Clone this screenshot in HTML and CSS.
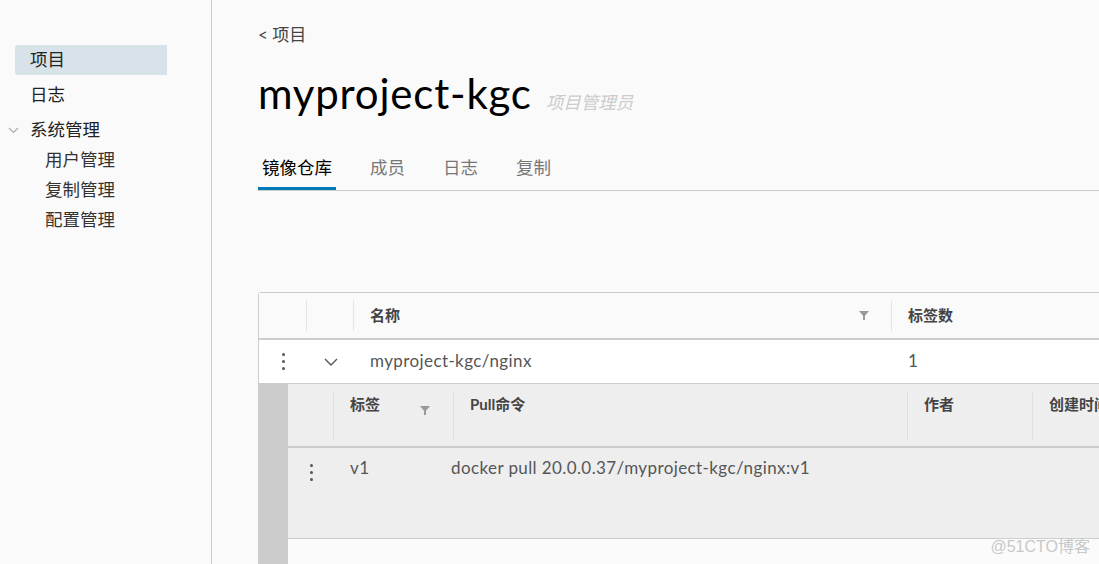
FILE: index.html
```html
<!DOCTYPE html>
<html lang="zh-CN">
<head>
    <meta charset="UTF-8">
    <title>myproject-kgc</title>
    <link rel="stylesheet" href="styles.css">
</head>
<body>
    <div class="sidebar">
        <div class="nav-item active">项目</div>
        <div class="nav-item">日志</div>
        <div class="nav-item group">
            <svg class="caret" width="11" height="7" viewBox="0 0 11 7"><path d="M1 1l4.5 4.5L10 1" fill="none" stroke="#aaa" stroke-width="1.2"/></svg>
            系统管理
        </div>
        <div class="nav-sub">用户管理</div>
        <div class="nav-sub">复制管理</div>
        <div class="nav-sub">配置管理</div>
    </div>

    <div class="main">
        <div class="breadcrumb">&lt; 项目</div>
        <div class="title-line">
            <h1>myproject-kgc</h1>
            <span class="role">项目管理员</span>
        </div>

        <div class="tabs">
            <div class="tab active">镜像仓库</div>
            <div class="tab">成员</div>
            <div class="tab">日志</div>
            <div class="tab">复制</div>
        </div>

        <div class="datagrid">
            <div class="grid-head">
                <div class="cell"></div>
                <div class="cell sep"></div>
                <div class="cell sep title">名称 <span class="filter"></span></div>
                <div class="cell sep title">标签数</div>
            </div>
            <div class="grid-row">
                <div class="cell center">
                    <span class="dots"><i></i><i></i><i></i></span>
                </div>
                <div class="cell center">
                    <svg width="14" height="8" viewBox="0 0 14 8"><path d="M1 1l6 6 6-6" fill="none" stroke="#565656" stroke-width="1.4"/></svg>
                </div>
                <div class="cell">myproject-kgc/nginx</div>
                <div class="cell">1</div>
            </div>

            <div class="detail">
                <div class="strip"></div>
                <div class="panel">
                    <div class="sub-head">
                        <div class="cell"></div>
                        <div class="cell sep title">标签 <span class="filter"></span></div>
                        <div class="cell sep title">Pull命令</div>
                        <div class="cell sep title">作者</div>
                        <div class="cell sep title">创建时间</div>
                    </div>
                    <div class="sub-row">
                        <div class="cell center">
                            <span class="dots"><i></i><i></i><i></i></span>
                        </div>
                        <div class="cell">v1</div>
                        <div class="cell">docker pull 20.0.0.37/myproject-kgc/nginx:v1</div>
                        <div class="cell"></div>
                        <div class="cell"></div>
                    </div>
                    <div class="sub-foot"></div>
                </div>
            </div>
        </div>
    </div>

    <div class="watermark">@51CTO博客</div>
</body>
</html>
```

FILE: styles.css
```css
body {
    margin: 0;
    height: 100vh;
    display: flex;
    background-color: #fafafa;
    color: #000;
    font-family: Lato, "Noto Sans CJK SC", sans-serif;
    overflow: hidden;
}

/* left nav */
.sidebar {
    width: 211px;
    flex-shrink: 0;
    border-right: 1px solid #ccc;
    padding-top: 45px;
}

.nav-item {
    margin-left: 15px;
    width: 137px;
    height: 30px;
    line-height: 29px;
    padding-left: 15px;
    margin-bottom: 5px;
    font-size: 17.5px;
    color: #222;
    border-radius: 3px 0 0 3px;
    position: relative;
}
.nav-item.group {
    margin-bottom: 0;
}
.nav-item.active {
    background-color: #d8e3e9;
}
.nav-item .caret {
    position: absolute;
    left: -7px;
    top: 12px;
}

.nav-sub {
    margin-left: 45px;
    height: 30px;
    line-height: 29px;
    font-size: 17.5px;
    color: #333;
}

/* content */
.main {
    flex: 1;
    padding-left: 46px;
    overflow: hidden;
}

.breadcrumb {
    margin-top: 23px;
    height: 24px;
    line-height: 24px;
    font-size: 17px;
    color: #444;
}

.title-line {
    display: flex;
    align-items: baseline;
    margin-top: 22px;
    height: 50px;
}
.title-line h1 {
    margin: 0;
    font-size: 42px;
    font-weight: 400;
    letter-spacing: 0.8px;
    line-height: 48px;
    color: #000;
}
.title-line .role {
    margin-left: 14px;
    font-size: 17.5px;
    font-style: italic;
    color: #ccc;
}

.tabs {
    display: flex;
    gap: 30px;
    margin-top: 27px;
    border-bottom: 1px solid #ccc;
    width: 1000px;
}
.tab {
    padding: 10px 4px;
    line-height: 24px;
    font-size: 17.5px;
    color: #777;
}
.tab.active {
    color: #000;
    box-shadow: inset 0 -3px 0 #0079b8;
}

/* table */
.datagrid {
    margin-top: 101px;
    width: 1000px;
    background-color: #fff;
    border: 1px solid #ccc;
    border-radius: 3px 0 0 0;
    font-size: 17px;
    letter-spacing: 0.4px;
    color: #565656;
}

.grid-head,
.grid-row {
    display: grid;
    grid-template-columns: 48px 47px 538px 1fr;
}
.grid-head {
    height: 45px;
    background-color: #fafafa;
    border-bottom: 2px solid #ccc;
}
.grid-row {
    height: 43px;
    border-bottom: 1px solid #ccc;
}

.cell {
    display: flex;
    align-items: center;
    padding-left: 16px;
    padding-bottom: 3px;
}
.cell.center {
    justify-content: center;
    padding-left: 0;
    padding-bottom: 0;
}
.grid-head .cell.sep {
    border-left: 1px solid #e4e4e4;
    margin: 7px 0 7px -1px;
}
.cell.title {
    font-size: 15px;
    font-weight: 700;
    letter-spacing: 0;
    color: #444;
    position: relative;
}

.filter {
    position: absolute;
    right: 23px;
    top: 50%;
    margin-top: -5px;
    width: 0;
    height: 0;
    border-left: 5px solid transparent;
    border-right: 5px solid transparent;
    border-top: 6px solid #999;
}
.filter::after {
    content: "";
    position: absolute;
    left: -1px;
    top: -1px;
    width: 2px;
    height: 4px;
    background-color: #999;
}

.dots {
    display: flex;
    flex-direction: column;
    gap: 4px;
}
.dots i {
    display: block;
    width: 3px;
    height: 3px;
    border-radius: 50%;
    background-color: #565656;
}

/* expanded row */
.detail {
    display: grid;
    grid-template-columns: 29px 1fr;
}
.strip {
    background-color: #ccc;
}
.panel {
    background-color: #fff;
}
.sub-head,
.sub-row {
    display: grid;
    background-color: #eee;
}
.sub-head {
    grid-template-columns: 46px 120px 454px 125px 1fr;
    height: 62px;
    border-bottom: 2px solid #ccc;
}
.sub-head .cell {
    align-items: flex-start;
    line-height: 20px;
    padding-top: 10px;
}
.sub-head .cell.sep {
    border-left: 1px solid #e0e0e0;
    margin: 8px 0 5px -1px;
    padding-top: 2px;
}
.sub-head .filter {
    right: 24px;
    top: 14px;
    margin-top: 0;
}
.sub-row {
    grid-template-columns: 46px 101px 473px 125px 1fr;
    height: 90px;
    border-bottom: 1px solid #ccc;
}
.sub-row .cell {
    align-items: flex-start;
    padding-top: 10px;
    line-height: 20px;
}
.sub-row .cell.center {
    padding-top: 16px;
}
.sub-foot {
    height: 40px;
    background-color: #fbfbfb;
}

.watermark {
    position: absolute;
    right: 9px;
    bottom: 7px;
    font-family: "Liberation Sans", "Noto Sans CJK SC", sans-serif;
    font-size: 16px;
    color: #c8c8c8;
}
```
